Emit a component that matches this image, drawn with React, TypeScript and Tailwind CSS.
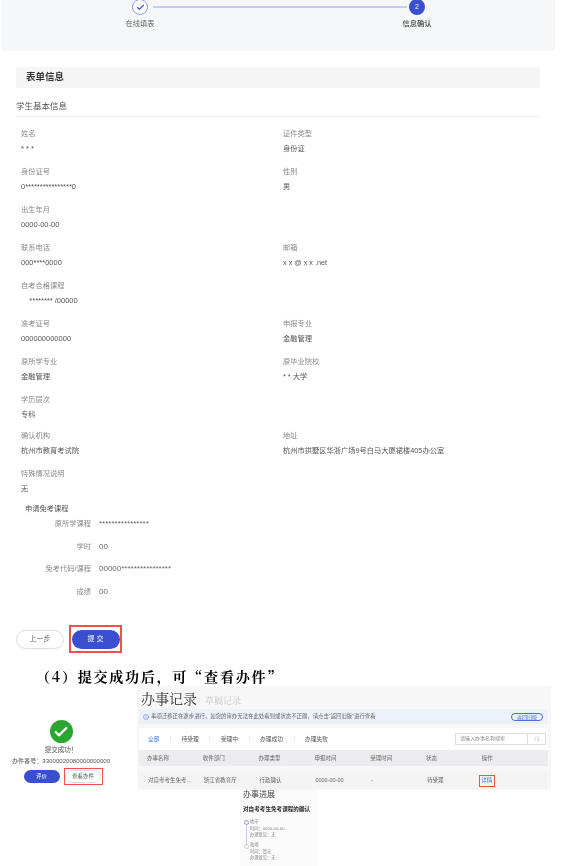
import { Check, Info, Search } from 'lucide-react';

const FONT = "font-['Liberation_Sans','Noto_Sans_CJK_SC',sans-serif]";
const SERIF = "font-['Noto_Serif_CJK_SC','Noto_Sans_CJK_SC',serif]";

const FIELDS = [
  ['姓名', '* * *', '证件类型', '身份证'],
  ['身份证号', '0****************0', '性别', '男'],
  ['出生年月', '0000-00-00', '', ''],
  ['联系电话', '000****0000', '邮箱', 'x x @ x x .net'],
  ['自考合格课程', '    ******** /00000', '', ''],
  ['准考证号', '000000000000', '申报专业', '金融管理'],
  ['原所学专业', '金融管理', '原毕业院校', '* * 大学'],
  ['学历层次', '专科', '', ''],
  ['确认机构', '杭州市教育考试院', '地址', '杭州市拱墅区华浙广场9号白马大厦裙楼405办公室'],
  ['特殊情况说明', '无', '', ''],
];

const COURSE = [
  ['原所学课程', '****************'],
  ['学时', '00'],
  ['免考代码/课程', '00000****************'],
  ['成绩', '00'],
];

const TABS = ['全部', '待受理', '受理中', '办理成功', '办理失败'];
const COLUMNS = ['办事名称', '收件部门', '办理类型', '申报时间', '受理时间', '状态', '操作'];
const VALUES = ['对自考考生免考…', '浙江省教育厅', '行政确认', '0000-00-00', '-', '待受理'];

function Field({ label, value, short }: { label: string; value: string; short: boolean }) {
  // digits in the picture run a little wider than the chinese text
  const size = /^[0-9*\s/-]+$/.test(value) ? 'text-[7.5px]' : 'text-[7.25px]';
  return (
    <div className={short ? 'h-[36px]' : 'h-[38px]'}>
      {label && <div className="text-[7.25px] leading-[12px] text-[#8a8a8a]">{label}</div>}
      {value && <div className={`${size} mt-[3px] leading-[12px] text-[#555] whitespace-pre`}>{value}</div>}
    </div>
  );
}

export default function App() {
  return (
    <div className={`${FONT} w-[577px] h-[866px] overflow-hidden bg-white blur-[0.3px]`}>
      {/* Stepper */}
      <div className="ml-px w-[554px] h-[51px] bg-[#f6f7f9] pl-[109px] pr-[108px] flex items-start overflow-hidden">
        <div className="w-[60px] -mt-px flex flex-col items-center relative z-10">
          <div className="w-4 h-4 rounded-full bg-white border border-[#8c9be8] flex items-center justify-center">
            <Check size={9} strokeWidth={3} className="text-[#3a4fd0]" />
          </div>
          <div className="mt-[4px] text-[7.25px] leading-[10px] text-[#666]">在线填表</div>
        </div>
        <div className="flex-1 h-0.5 mt-[6px] -ml-[17px] -mr-[20px] bg-[#c3cdf0]" />
        <div className="w-[60px] -mt-px flex flex-col items-center relative z-10">
          <div className="w-4 h-4 rounded-full bg-[#3a4fd0] text-white text-[7px] flex items-center justify-center">2</div>
          <div className="mt-[4px] text-[7.25px] leading-[10px] text-[#444] font-medium">信息确认</div>
        </div>
      </div>

      {/* Form */}
      <div className="pl-4 w-[540px] pt-4">
        <div className="h-[21px] bg-[#f5f5f5] pl-[10px] flex items-center text-[9.5px] font-bold text-[#333]">表单信息</div>
        <div className="mt-[12px] h-[17px] border-b border-[#eee] text-[8.5px] leading-[12px] text-[#555]">学生基本信息</div>
        <div className="mt-[11px] pl-[5px] grid grid-cols-[262px_1fr]">
          {FIELDS.map((f) => (
            <div key={f[0]} className="contents">
              <Field label={f[0]} value={f[1]} short={f[0] === '学历层次'} />
              <Field label={f[2]} value={f[3]} short={f[0] === '学历层次'} />
            </div>
          ))}
        </div>

        <div className="pl-[9px] -mt-[3px] text-[7.25px] leading-[12px] text-[#555]">申请免考课程</div>
        <div className="mt-[2px]">
          {COURSE.map(([label, value]) => (
            <div key={label} className="h-[22.5px] flex items-start leading-[14px]">
              <div className="w-[75px] text-right text-[7.25px] text-[#8a8a8a]">{label}</div>
              <div className="ml-[8px] text-[8px] text-[#666]">{value}</div>
            </div>
          ))}
        </div>

        <div className="mt-[18px] flex items-center">
          <button className="w-12 h-[19px] rounded-full border border-[#ddd] bg-white text-[7px] text-[#666]">上一步</button>
          <div className="ml-[5px] w-[53px] h-[28px] border-2 border-[#f05050] flex items-center justify-center">
            <button className="w-[48px] h-[19px] rounded-full bg-[#3a4fd0] text-white text-[7px]">提 交</button>
          </div>
        </div>
      </div>

      {/* Document heading */}
      <div className={`${SERIF} mt-[13px] pl-[36px] h-[21px] text-[14px] leading-[20px] font-bold text-black tracking-[1.8px] whitespace-nowrap`}>
        （4）提交成功后，可“查看办件”
      </div>

      <div className="-mt-px flex items-start">
        {/* Success */}
        <div className="w-[122px] pt-[34px] flex flex-col items-center">
          <div className="w-[23px] h-[23px] rounded-full bg-[#2aa52f] flex items-center justify-center">
            <Check size={16} strokeWidth={3.5} className="text-white" />
          </div>
          <div className="mt-[1px] text-[6.5px] leading-[12px] text-[#555]">提交成功！</div>
          <div className="text-[6.1px] leading-[10px] text-[#555] whitespace-nowrap">办件番号：33000020080000000000</div>
          <div className="mt-[2px] ml-[4px] flex items-center">
            <button className="w-9 h-[13px] rounded-full bg-[#3a4fd0] text-white text-[5.5px]">评价</button>
            <div className="ml-[4px] w-[39px] h-[17px] border border-[#f05050] flex items-center justify-center">
              <button className="w-[36px] h-[13px] rounded-full border border-[#ddd] text-[5.5px] text-[#555]">查看办件</button>
            </div>
          </div>
        </div>

        {/* Records */}
        <div className="ml-[15px] w-[414px] h-[104px] bg-[#f7f7f7] pl-[2px] pr-[3px] pt-[2px]">
          <div className={`${SERIF} h-[21px] flex items-baseline pl-[2px]`}>
            <span className="text-[14px] leading-[20px] text-[#333]">办事记录</span>
            <span className="ml-2 text-[9px] text-[#c4c4c4]">草稿记录</span>
          </div>
          <div className="h-[15px] bg-[#edf2fa] flex items-center pl-[4px] pr-[5px] text-[5.4px] text-[#666] whitespace-nowrap">
            <Info size={6} className="text-[#4a6fd8] mr-[2px]" />
            <span className="flex-1">事项迁移正在逐步进行，如您的审办无法在此处看到或状态不正确，请点击“返回旧版”进行查看</span>
            <span className="w-8 h-2 rounded-full border border-[#4a6fd8] text-[#4a6fd8] text-[5px] leading-[6px] text-center">返回旧版</span>
          </div>
          <div className="mt-[4px] bg-white">
            <div className="h-[22px] flex items-center text-[5.75px] text-[#555] pl-[9px] pr-[2px]">
              {TABS.map((tab, i) => (
                <div key={tab} className="flex items-center">
                  {i > 0 && <span className="w-px h-[6px] bg-[#e5e5e5] mx-[10.5px]" />}
                  <span className={i === 0 ? 'text-[#3a7be0]' : ''}>{tab}</span>
                </div>
              ))}
              <div className="ml-auto w-[91px] h-3 border border-[#ddd] flex items-center pl-1 text-[5px] text-[#888]">
                <span className="flex-1">请输入办事名称搜索</span>
                <span className="w-[18px] h-full border-l border-[#ddd] flex items-center justify-center">
                  <Search size={6} className="text-[#bbb]" />
                </span>
              </div>
            </div>
          </div>
          <div className="h-[16px] bg-[#ececee] flex items-center pl-[8px] text-[5.5px] text-[#666]">
            {COLUMNS.map((c) => (
              <span key={c} className="w-[55.8px]">{c}</span>
            ))}
          </div>
          <div className="mt-[6px] h-[17px] bg-[#f3f3f3] flex items-center pl-[9px] text-[5.5px] text-[#666]">
            {VALUES.map((c) => (
              <span key={c} className="w-[55.8px] whitespace-nowrap">{c}</span>
            ))}
            <span className="-ml-[4px] w-[16px] h-3 border-[1.5px] border-[#f05050] text-center leading-[9px] text-[#3a7be0]">详情</span>
          </div>
        </div>
      </div>

      {/* Progress */}
      <div className="ml-[240px] -mt-[2px] w-[78px] h-[78px] bg-[#fbfbfb] pl-[3px] pt-[1px]">
        <div className="text-[8px] leading-[12px] text-[#444]">办事进展</div>
        <div className="mt-[4px] text-[5.6px] leading-[8px] font-bold text-[#222] whitespace-nowrap">对自考考生免考课程的确认</div>
        <div className="mt-[6px] flex">
          <div className="w-[6px] flex flex-col items-center pt-[1px]">
            <span className="w-[5px] h-[5px] rounded-full border border-[#8c9be8]" />
            <span className="w-px h-[19px] bg-[#c3cdf0]" />
            <span className="w-[5px] h-[5px] rounded-full border border-[#ccc]" />
          </div>
          <div className="ml-[1px] text-[4.25px] leading-[6px] text-[#888]">
            <div>地市</div>
            <div className="mt-[1px]">时间：0000-00-00</div>
            <div>办理意见：无</div>
            <div className="mt-[4px]">政地</div>
            <div className="mt-[1px]">时间：暂无</div>
            <div>办理意见：无</div>
          </div>
        </div>
      </div>
    </div>
  );
}
